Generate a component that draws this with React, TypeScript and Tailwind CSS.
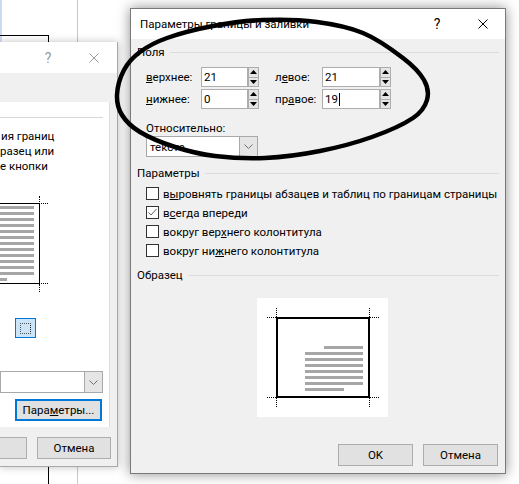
import React from "react";

const pts: [number, number][] = [
  [117, 95], [124, 70], [140, 52], [167, 38], [213, 26], [263, 20], [317, 22], [363, 33],
  [403, 58], [424, 80], [427, 100], [413, 118], [372, 137], [320, 151], [265, 158],
  [215, 156], [175, 147], [140, 132], [122, 115],
];

function closedPath(p: [number, number][]) {
  const n = p.length;
  let d = `M${p[0][0]},${p[0][1]}`;
  for (let i = 0; i < n; i++) {
    const p0 = p[(i - 1 + n) % n];
    const p1 = p[i];
    const p2 = p[(i + 1) % n];
    const p3 = p[(i + 2) % n];
    const c1x = p1[0] + (p2[0] - p0[0]) / 6;
    const c1y = p1[1] + (p2[1] - p0[1]) / 6;
    const c2x = p2[0] - (p3[0] - p1[0]) / 6;
    const c2y = p2[1] - (p3[1] - p1[1]) / 6;
    d += ` C${c1x.toFixed(1)},${c1y.toFixed(1)} ${c2x.toFixed(1)},${c2y.toFixed(1)} ${p2[0]},${p2[1]}`;
  }
  return d + " Z";
}

function CloseIcon({ color }: { color: string }) {
  return (
    <svg width="10" height="10" viewBox="0 0 10 10">
      <path d="M0.5 0.5 L9.5 9.5 M9.5 0.5 L0.5 9.5" stroke={color} strokeWidth="1" />
    </svg>
  );
}

function Spin() {
  return (
    <div className="flex flex-col w-[11px] h-full border border-[#adadad] bg-[#e5e5e5]">
      <div className="flex-1 flex items-center justify-center border-b border-[#adadad]">
        <svg width="7" height="4" viewBox="0 0 7 4"><path d="M0 4 L3.5 0 L7 4 Z" fill="#000" /></svg>
      </div>
      <div className="flex-1 flex items-center justify-center">
        <svg width="7" height="4" viewBox="0 0 7 4"><path d="M0 0 L3.5 4 L7 0 Z" fill="#000" /></svg>
      </div>
    </div>
  );
}

function NumField({ value, w, cursor }: { value: string; w: string; cursor?: boolean }) {
  return (
    <div className={`flex h-[20px] ${w}`}>
      <div className="flex-1 flex items-center bg-white border border-[#adadad] pl-[2px]">
        <span>{value}</span>
        {cursor && <span className="w-px h-[13px] bg-black ml-[1px]" />}
      </div>
      <Spin />
    </div>
  );
}

function Chevron({ color = "#707070" }: { color?: string }) {
  return (
    <svg width="9" height="5" viewBox="0 0 9 5">
      <path d="M0.5 0.5 L4.5 4.5 L8.5 0.5" stroke={color} strokeWidth="1" fill="none" />
    </svg>
  );
}

function GroupHeader({ label, mt }: { label: string; mt: string }) {
  return (
    <div className={`flex items-center h-[16px] pl-[6px] pr-[6px] ${mt}`}>
      <span>{label}</span>
      <div className="flex-1 h-px bg-[#dcdcdc] ml-[5px]" />
    </div>
  );
}

function Check({ checked, children }: { checked?: boolean; children: React.ReactNode }) {
  return (
    <div className="flex items-center h-[19px] pl-[15px] whitespace-nowrap">
      <div className="w-[13px] h-[13px] shrink-0 bg-white border border-[#333333] flex items-center justify-center">
        {checked && (
          <svg width="11" height="11" viewBox="0 0 11 11">
            <path d="M1.5 5.5 L4 8 L9.5 2" stroke="#606060" strokeWidth="1" fill="none" />
          </svg>
        )}
      </div>
      <span className="ml-[4px]">{children}</span>
    </div>
  );
}

function Corner({ pos }: { pos: string }) {
  return <div className={`absolute ${pos}`} />;
}

export default function App() {
  const lines = [0, 1, 2, 3, 4, 5, 6, 7];
  const leftLines = Array.from({ length: 13 }, (_, i) => i);
  return (
    <div className="relative w-[519px] h-[484px] overflow-hidden bg-white font-['Roboto',sans-serif] text-[11.5px] leading-[16px] text-black">
      {/* document background */}
      <div className="absolute left-0 top-0 w-[2px] h-[42px] bg-[#cbdaf0]" />
      <div className="absolute left-[77px] top-0 w-px h-[484px] bg-[#c8c8c8]" />
      <div className="absolute left-0 top-[35px] w-[49px] h-px bg-black" />
      <div className="absolute left-[48px] top-[35px] w-px h-[449px] bg-black" />

      {/* left (background) dialog */}
      <div className="absolute left-0 top-[42px] w-[118px] h-[425px] bg-[#f0f0f0] border-r border-b border-[#aaaaaa] shadow-[0_0_8px_rgba(0,0,0,0.25)] flex flex-col">
        <div className="h-[31px] bg-white flex items-center justify-end shrink-0">
          <span className="w-[46px] text-center text-[#9a9a9a] text-[14px]">?</span>
          <span className="w-[46px] flex justify-center"><CloseIcon color="#9a9a9a" /></span>
        </div>
        <div className="mt-[29px] w-[110px] h-[325px] bg-white border-r border-[#dcdcdc] flex flex-col">
          <div className="mt-[15px] w-[103px] h-px bg-[#d6d6d6]" />
          <div className="mt-[11px] leading-[15px] whitespace-nowrap">
            <div className="pl-[1px]">ия границ</div>
            <div>разец или</div>
            <div>е кнопки</div>
          </div>
          <div className="relative mt-[29px] w-[40px] h-[81px] border-t border-r border-b border-black">
            <div className="absolute left-0 top-[2px] flex flex-col gap-[3px]">
              {leftLines.map((i) => (
                <div key={i} className={`h-[3px] bg-[#a6a6a6] ${i === 12 ? "w-[7px]" : "w-[34px]"}`} />
              ))}
            </div>
            <div className="absolute left-[39px] top-[-8px] h-[8px] border-l border-dotted border-black" />
            <div className="absolute left-[39px] top-[-1px] w-[9px] border-t border-dotted border-black" />
            <div className="absolute left-[39px] bottom-[-9px] h-[8px] border-l border-dotted border-black" />
            <div className="absolute left-[39px] bottom-[-1px] w-[9px] border-t border-dotted border-black" />
          </div>
          <div className="mt-[34px] ml-[15px] w-[21px] h-[20px] border border-[#0078d7] bg-[#cce4f7] flex items-center justify-center">
            <div className="w-[11px] h-[11px] border border-dotted border-[#555] border-r-[#222] border-r-solid" />
          </div>
          <div className="mt-[33px] w-[103px] h-[22px] flex bg-white border border-[#a9a9a9]">
            <div className="flex-1" />
            <div className="w-[18px] bg-[#e5e5e5] border-l border-[#a9a9a9] flex items-center justify-center"><Chevron /></div>
          </div>
          <div className="mt-[6px] ml-[15px] w-[87px] h-[22px] border-2 border-[#0078d7] bg-[#e1e1e1] flex items-center justify-center whitespace-nowrap">
            <span>Пара<span className="underline">м</span>етры...</span>
          </div>
        </div>
        <div className="mt-[10px] flex h-[22px]">
          <div className="w-[27px] bg-[#e1e1e1] border border-[#adadad] border-l-0" />
          <div className="ml-[10px] w-[74px] bg-[#e1e1e1] border border-[#adadad] flex items-center justify-center">Отмена</div>
        </div>
      </div>

      {/* main dialog */}
      <div className="absolute left-[130px] top-[8px] w-[376px] h-[466px] border border-[#7a7a7a] bg-[#f0f0f0] shadow-[0_0_12px_rgba(0,0,0,0.45)] flex flex-col">
        <div className="h-[30px] bg-white flex items-center shrink-0">
          <span className="pl-[9px] flex-1 whitespace-nowrap">Параметры границы и заливки</span>
          <span className="w-[46px] text-center text-[14px]">?</span>
          <span className="w-[45px] flex justify-center"><CloseIcon color="#000" /></span>
        </div>
        <GroupHeader label="Поля" mt="mt-[5px]" />
        <div className="mt-[7px] flex flex-col gap-[2px] pl-[15px]">
          <div className="flex items-center">
            <span className="w-[55px]"><span className="underline">в</span>ерхнее:</span>
            <NumField value="21" w="w-[58px]" />
            <span className="ml-[16px] w-[47px]">л<span className="underline">е</span>вое:</span>
            <NumField value="21" w="w-[69px]" />
          </div>
          <div className="flex items-center">
            <span className="w-[55px]"><span className="underline">н</span>ижнее:</span>
            <NumField value="0" w="w-[58px]" />
            <span className="ml-[16px] w-[47px]">пр<span className="underline">а</span>вое:</span>
            <NumField value="19" w="w-[69px]" cursor />
          </div>
        </div>
        <div className="mt-[11px] pl-[15px]">Относительно:</div>
        <div className="ml-[15px] w-[112px] h-[21px] flex bg-white border border-[#a9a9a9]">
          <div className="flex-1 pl-[3px] flex items-center">текста</div>
          <div className="w-[18px] bg-[#e5e5e5] border-l border-[#a9a9a9] flex items-center justify-center"><Chevron /></div>
        </div>
        <GroupHeader label="Параметры" mt="mt-[8px]" />
        <div className="mt-[3px] flex flex-col">
          <Check>в<span className="underline">ы</span>ровнять границы абзацев и таблиц по границам страницы</Check>
          <Check checked>в<span className="underline">с</span>егда впереди</Check>
          <Check>вокруг вер<span className="underline">х</span>него колонтитула</Check>
          <Check>вокруг ни<span className="underline">ж</span>него колонтитула</Check>
        </div>
        <GroupHeader label="Образец" mt="mt-[7px]" />
        <div className="mt-[15px] ml-[126px] w-[131px] h-[119px] bg-white relative">
          <div className="absolute left-[19px] top-[19px] w-[94px] h-[81px] border-2 border-black">
            <div className="absolute left-[27px] top-[27px] flex flex-col gap-[3px]">
              {lines.map((i) => (
                <div
                  key={i}
                  className={`h-[3px] bg-[#a6a6a6] ${i === 0 ? "w-[39px] ml-[19px]" : i === 7 ? "w-[39px]" : "w-[58px]"}`}
                />
              ))}
            </div>
          </div>
          <Corner pos="left-[10px] top-[19px] w-[9px] border-t border-dotted border-black" />
          <Corner pos="left-[19px] top-[10px] h-[9px] border-l border-dotted border-black" />
          <Corner pos="left-[113px] top-[19px] w-[9px] border-t border-dotted border-black" />
          <Corner pos="left-[112px] top-[10px] h-[9px] border-l border-dotted border-black" />
          <Corner pos="left-[10px] top-[99px] w-[9px] border-t border-dotted border-black" />
          <Corner pos="left-[19px] top-[100px] h-[9px] border-l border-dotted border-black" />
          <Corner pos="left-[113px] top-[99px] w-[9px] border-t border-dotted border-black" />
          <Corner pos="left-[112px] top-[100px] h-[9px] border-l border-dotted border-black" />
        </div>
        <div className="mt-[27px] flex justify-end pr-[7px] gap-[10px]">
          <div className="w-[75px] h-[22px] bg-[#e1e1e1] border border-[#adadad] flex items-center justify-center">OK</div>
          <div className="w-[75px] h-[22px] bg-[#e1e1e1] border border-[#adadad] flex items-center justify-center">Отмена</div>
        </div>
      </div>

      {/* hand-drawn ellipse annotation */}
      <svg className="absolute left-0 top-0 pointer-events-none" width="519" height="484">
        <path d={closedPath(pts)} fill="none" stroke="#000" strokeWidth="4.5" strokeLinejoin="round" />
      </svg>
    </div>
  );
}
